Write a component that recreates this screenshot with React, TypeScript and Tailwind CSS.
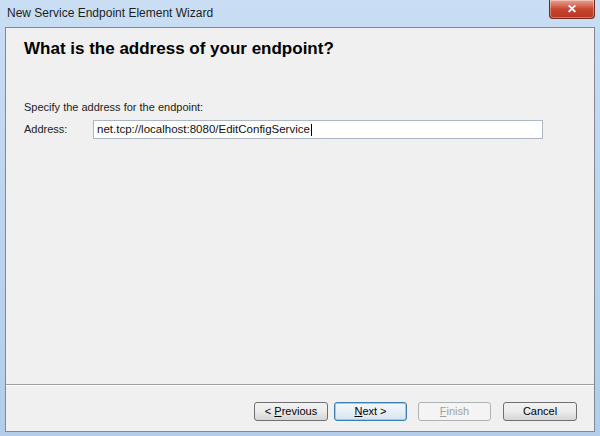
export default function App() {
  return (
    <div className="relative h-[436px] w-[600px] overflow-hidden bg-gradient-to-b from-[#c9def3] via-[#bcd4ee] to-[#b3cdea] font-['Liberation_Sans',Arial,sans-serif] text-[#000]">
      {/* title bar */}
      <div className="flex h-[27px] items-start justify-between pl-[7px] pr-[5px]">
        <span className="pt-[4px] text-[12px] text-[#1e1e1e]">New Service Endpoint Element Wizard</span>
        <button className="flex h-[19px] w-[46px] items-center justify-center rounded-b-[4px] border border-t-0 border-[#6b2a22] bg-gradient-to-b from-[#e8a291] via-[#c8462f] to-[#b8341f] text-[12px] font-bold text-white shadow-[inset_0_0_0_1px_rgba(255,255,255,0.35)]">
          ✕
        </button>
      </div>

      {/* client area */}
      <div className="mx-[5px] flex h-[405px] flex-col border border-[#7e8a97] bg-[#f0f0f0]">
        <div className="px-[18px] pt-[8px]">
          <h1 className="text-[17px] font-bold tracking-[0px]">What is the address of your endpoint?</h1>
        </div>

        <div className="flex-1 px-[18px] pt-[37px] text-[11px] text-[#222]">
          <p>Specify the address for the endpoint:</p>
          <div className="mt-[5px] flex items-center">
            <span className="w-[69px]">Address:</span>
            <div className="flex h-[19px] w-[450px] items-center border border-[#abb7c4] bg-white pl-[3px] text-[11.5px] text-[#111]">
              net.tcp://localhost:8080/EditConfigService
              <span className="ml-[1px] h-[12px] w-[1px] bg-black" />
            </div>
          </div>
        </div>

        <div className="h-[47px] border-t border-[#a0a0a0] shadow-[inset_0_1px_0_#ffffff]">
          <div className="flex justify-end gap-[6px] pr-[17px] pt-[17px] text-[11px]">
            <button className="h-[19px] w-[74px] rounded-[3px] border border-[#707070] bg-gradient-to-b from-[#f2f2f2] via-[#ebebeb] to-[#d6d6d6]">
              &lt; <span className="underline">P</span>revious
            </button>
            <button className="h-[19px] w-[73px] rounded-[3px] border border-[#3c7fb1] bg-gradient-to-b from-[#f2f7fb] via-[#e8f0f7] to-[#d4e4f1] shadow-[inset_0_0_0_1px_#8ed0ee]">
              <span className="underline">N</span>ext &gt;
            </button>
            <button className="ml-[5px] h-[19px] w-[73px] rounded-[3px] border border-[#adb2b5] bg-[#f4f4f4] text-[#a0a0a0]">
              <span className="underline">F</span>inish
            </button>
            <button className="ml-[6px] h-[19px] w-[74px] rounded-[3px] border border-[#707070] bg-gradient-to-b from-[#f2f2f2] via-[#ebebeb] to-[#d6d6d6]">
              Cancel
            </button>
          </div>
        </div>
      </div>
    </div>
  );
}
